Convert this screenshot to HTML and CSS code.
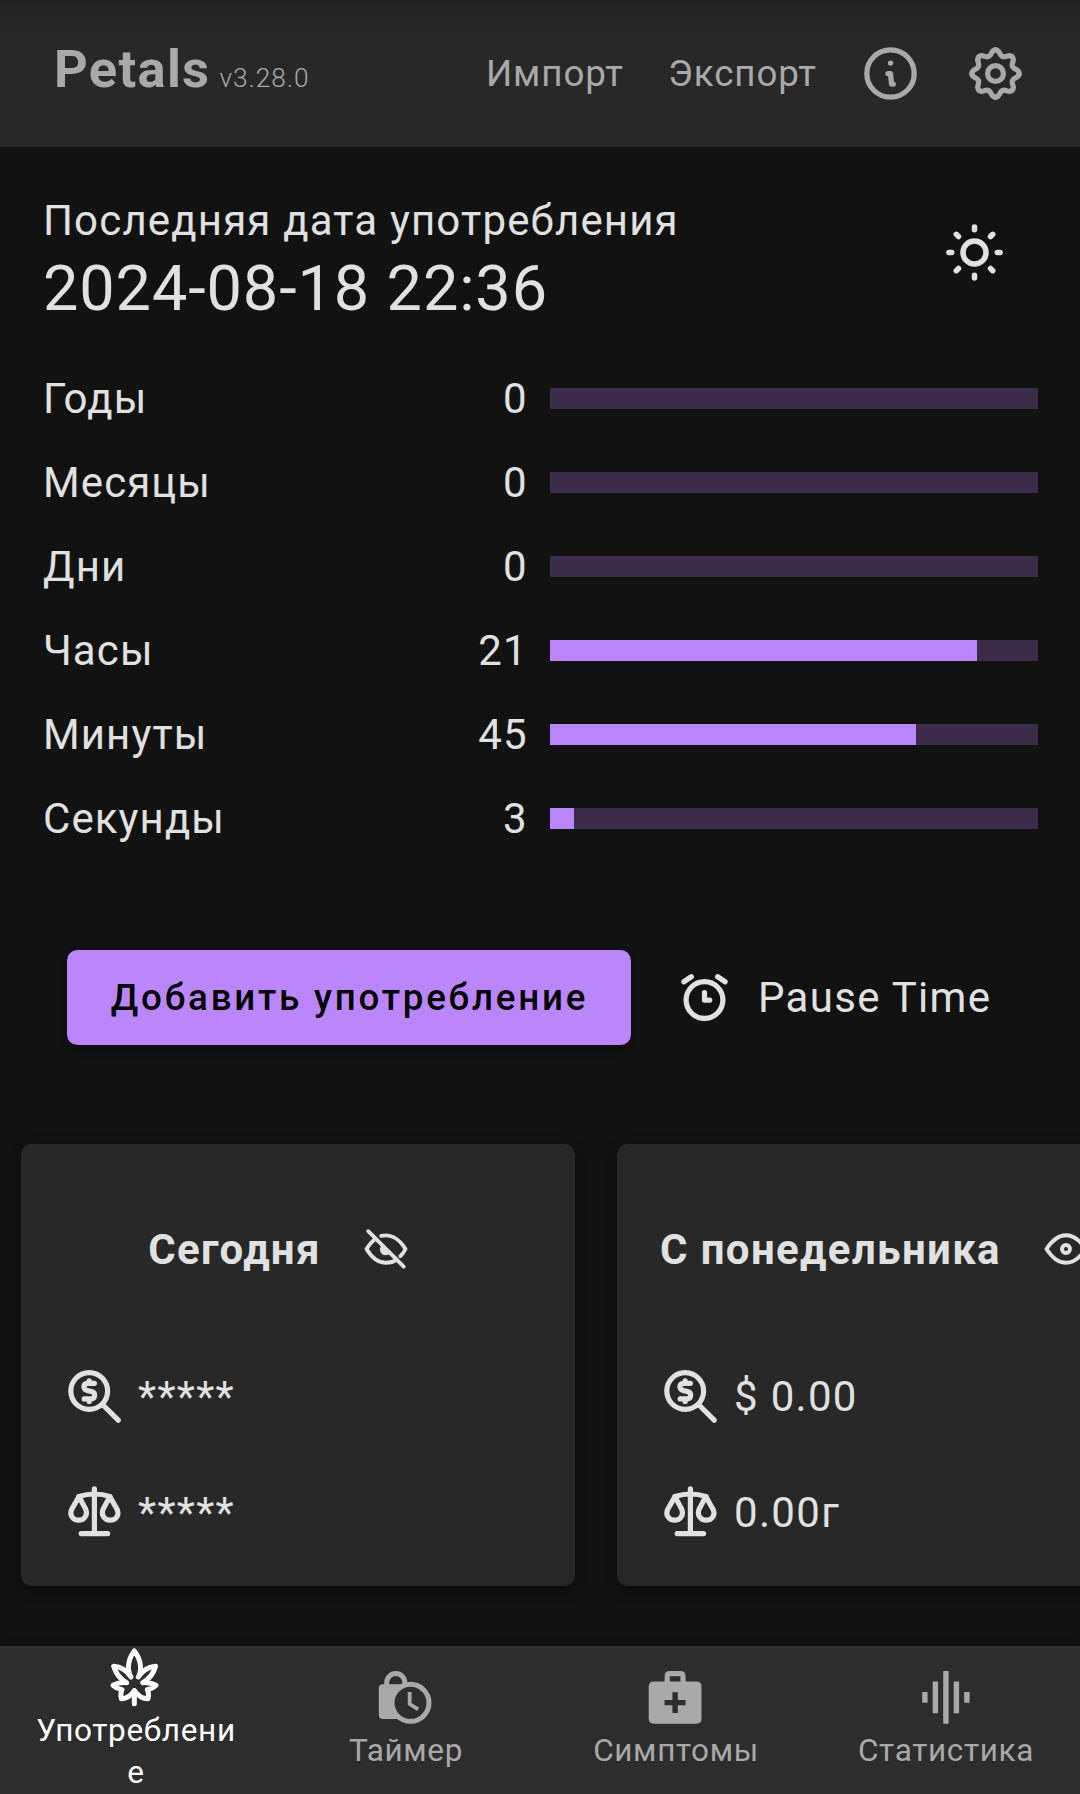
FILE: index.html
```html
<!DOCTYPE html>
<html lang="ru">
<head>
<meta charset="utf-8">
<title>Petals</title>
<link rel="stylesheet" href="styles.css">
</head>
<body>
<svg class="defs" aria-hidden="true">
  <defs>
    <symbol id="i-money" viewBox="0 0 53 53">
      <g fill="none" stroke="currentColor" stroke-width="5.2" stroke-linecap="round">
        <circle cx="21.2" cy="21" r="18.4"/>
        <path d="M35.5 35.5L50.2 50.2"/>
        <path d="M26.4 13.3H20.5C14.6 13.3 14.6 19.4 19 20.4L23.5 21.6C28.2 23 27.3 28.9 22.5 28.9H16.2M21.2 10.9V13M21.2 29V31.5"/>
      </g>
    </symbol>
    <symbol id="i-scale" viewBox="0 0 53 53">
      <g fill="none" stroke="currentColor" stroke-width="5.2" stroke-linecap="round" stroke-linejoin="round">
        <path d="M26.4 2.8V47.6M13.2 47.6H39.6M11 10.4Q18.5 8 26.4 8T41.8 10.4"/>
        <path d="M11 10.6L3.9 23C.8 29 5 34.2 10.6 34.2S20.2 29 17.6 23Z"/>
        <path d="M41.8 10.6L48.9 23C52 29 47.8 34.2 42.2 34.2S32.6 29 35.2 23Z"/>
      </g>
    </symbol>
    <symbol id="i-eye" viewBox="-22 -22 44 44">
      <g fill="none" stroke="currentColor" stroke-width="3.9" stroke-linejoin="round">
        <path d="M-19.5 0C-15 -7-9-13.8 0-13.8S15-7 19.5 0C15 7 9 13.8 0 13.8S-15 7-19.5 0Z"/>
        <circle r="4"/>
      </g>
    </symbol>
    <symbol id="i-eye-off" viewBox="-22 -22 44 44">
      <g fill="none" stroke="currentColor" stroke-width="3.9" stroke-linecap="round" stroke-linejoin="round">
        <path d="M-17.8-17.8L17.7 17.7M-4.8-13.1C7.5-16 14.5-7.8 19.5 0Q17.5 4 14.4 7.2"/>
        <path d="M-11.2-9.8C-15-6.8-17.5-3.6-19.5 0C-13.8 9.5-7.5 13.8 0 13.8C4.5 13.8 8 12.6 10.8 10.6"/>
      </g>
      <path d="M-4.5-3.8A5.8 5.8 0 0 0 4.2 4.4Z" fill="currentColor"/>
    </symbol>
    <path id="tooth" d="M0-23.6C4.8-23.6 3.2-18.6 7.04-17C10.9-15.4 13.3-20.08 16.69-16.69"/>
  </defs>
</svg>

<header class="topbar">
  <div class="brand"><span class="brand-name">Petals</span><span class="brand-version">v3.28.0</span></div>
  <a class="action action-import">Импорт</a>
  <a class="action action-export">Экспорт</a>
  <svg class="icon icon-info" viewBox="-31.5 -31.5 63 63" fill="none" stroke="currentColor" stroke-width="5.25" stroke-linecap="round" stroke-linejoin="round">
    <circle r="23.7"/>
    <path d="M-2.6 0H0L1 10.6H2.8"/>
    <circle cy="-10.4" r="2.7" fill="currentColor" stroke="none"/>
  </svg>
  <svg class="icon icon-gear" viewBox="-31.5 -31.5 63 63" fill="none" stroke="currentColor" stroke-width="5.25" stroke-linecap="round">
    <use href="#tooth"/><use href="#tooth" transform="rotate(45)"/><use href="#tooth" transform="rotate(90)"/><use href="#tooth" transform="rotate(135)"/>
    <use href="#tooth" transform="rotate(180)"/><use href="#tooth" transform="rotate(225)"/><use href="#tooth" transform="rotate(270)"/><use href="#tooth" transform="rotate(315)"/>
    <circle r="7.9"/>
  </svg>
</header>

<main class="content">
  <section class="last">
    <div class="last-text">
      <div class="last-label">Последняя дата употребления</div>
      <div class="last-date">2024-08-18 22:36</div>
    </div>
    <svg class="icon icon-sun" viewBox="-31.5 -31.5 63 63" fill="none" stroke="currentColor" stroke-width="5.5" stroke-linecap="round">
      <circle r="11.5"/>
      <path d="M0-25.6V-22.8M0 22.8V25.6M-25.6 0H-22.8M22.8 0H25.6M-18.2-18.2L-16-16M18.2-18.2L16-16M-18.2 18.2L-16 16M18.2 18.2L16 16"/>
    </svg>
  </section>

  <section class="counters">
    <div class="counter"><span>Годы</span><span class="num">0</span><div class="bar"></div></div>
    <div class="counter"><span>Месяцы</span><span class="num">0</span><div class="bar"></div></div>
    <div class="counter"><span>Дни</span><span class="num">0</span><div class="bar"></div></div>
    <div class="counter"><span>Часы</span><span class="num">21</span><div class="bar"><div class="fill" style="width:87.5%"></div></div></div>
    <div class="counter"><span>Минуты</span><span class="num">45</span><div class="bar"><div class="fill" style="width:75%"></div></div></div>
    <div class="counter"><span>Секунды</span><span class="num">3</span><div class="bar"><div class="fill" style="width:5%"></div></div></div>
  </section>

  <section class="controls">
    <button class="add">Добавить употребление</button>
    <svg class="icon icon-alarm" viewBox="-31.5 -34 63 63" fill="none" stroke="currentColor" stroke-width="5.25" stroke-linecap="round" stroke-linejoin="round">
      <circle r="18.4"/>
      <path d="M-20.6-18.2L-13.2-23.2M20.6-18.2L13.2-23.2M0-7.4V0H5.2"/>
    </svg>
    <span class="pause">Pause Time</span>
  </section>

  <section class="cards">
    <article class="card">
      <div class="card-head"><h2>Сегодня</h2><svg class="eye"><use href="#i-eye-off"/></svg></div>
      <div class="stat"><svg class="stat-icon"><use href="#i-money"/></svg><span>*****</span></div>
      <div class="stat"><svg class="stat-icon"><use href="#i-scale"/></svg><span>*****</span></div>
    </article>
    <article class="card">
      <div class="card-head"><h2>С понедельника</h2><svg class="eye"><use href="#i-eye"/></svg></div>
      <div class="stat"><svg class="stat-icon"><use href="#i-money"/></svg><span>$ 0.00</span></div>
      <div class="stat"><svg class="stat-icon"><use href="#i-scale"/></svg><span>0.00г</span></div>
    </article>
  </section>
</main>

<nav class="tabs">
  <a class="tab tab-active">
    <svg class="icon" viewBox="39 18 189 189" fill="none" stroke="currentColor" stroke-width="15" stroke-linecap="round" stroke-linejoin="round">
      <path d="M123 111C113 95 110 62 133 33C156 62 155 95 145 111C160 88 178 80 197 79C190 102 178 118 158 128Q178 126 198 136Q188 146 172 149Q178 160 174 176Q152 177 133 152Q116 177 94 176Q90 160 96 149Q80 146 69 136Q88 126 110 128C90 118 78 102 71 79C90 80 108 88 123 111Z"/>
      <path d="M133 152V191"/>
    </svg>
    <span>Употреблени<br>е</span>
  </a>
  <a class="tab">
    <svg class="icon" viewBox="850.5 78 189 189" fill="none" stroke="currentColor">
      <path d="M888.5 138V128a27.3 27.3 0 0 1 54.6 0V138" stroke-width="15"/>
      <rect x="865" y="133" width="90" height="104" rx="12" fill="currentColor" stroke="none"/>
      <circle class="clock-face" cx="960" cy="188.500" r="55.500" stroke-width="15"/>
      <path d="M957.500 156V192L983 208" stroke-width="11.500"/>
    </svg>
    <span>Таймер</span>
  </a>
  <a class="tab">
    <svg class="icon" viewBox="0 0 63 63" fill="currentColor" fill-rule="evenodd">
      <path d="M20.600 15.500V10.200Q20.600 5 25.800 5H36.400Q41.600 5 41.600 10.200V15.500H52.300Q57.500 15.500 57.500 20.700V52.500Q57.500 57.700 52.300 57.700H9.900Q4.700 57.700 4.700 52.500V20.700Q4.700 15.500 9.900 15.500ZM25.800 10.300H36.400V15.500H25.800ZM28.400 26.200V34H20.600V39.300H28.400V47.100H33.800V39.300H41.600V34H33.800V26.200Z"/>
    </svg>
    <span>Симптомы</span>
  </a>
  <a class="tab">
    <svg class="icon" viewBox="0 0 63 63" fill="currentColor">
      <path d="M29.200 5H34.600V57.800H29.200ZM18.700 15.500H24.100V47.200H18.700ZM39.700 15.500H45.100V47.200H39.700ZM8.200 26H13.600V36.700H8.200ZM50.200 26H55.600V36.700H50.200Z"/>
    </svg>
    <span>Статистика</span>
  </a>
</nav>
</body>
</html>
```
FILE: styles.css
```css
* { box-sizing: border-box; }

body {
  margin: 0;
  width: 1080px;
  height: 1794px;
  display: flex;
  flex-direction: column;
  overflow: hidden;
  background: #121212;
  color: #e1e1e1;
  font-family: Roboto, "Liberation Sans", sans-serif;
  font-size: 42px;
  letter-spacing: 1.31px;
}

svg { display: block; flex: none; }
.defs { position: absolute; width: 0; height: 0; }
.icon { width: 63px; height: 63px; }

.topbar {
  height: 147px;
  flex: none;
  display: flex;
  align-items: center;
  padding-left: 54px;
  background: linear-gradient(#1f1f1f 0, #252525 8px, #282828 40px);
  color: #a9a9a9;
}
.brand { width: 432px; line-height: 62px; white-space: nowrap; }
.brand-name { font-size: 52.5px; font-weight: 700; letter-spacing: 1.3px; }
.brand-version { margin-left: 9px; font-size: 26.25px; font-weight: 300; letter-spacing: 0.95px; }
.action { font-size: 36.75px; letter-spacing: 0.9px; white-space: nowrap; }
.action-import { width: 182px; }
.action-export { width: 191px; }
.icon-gear { margin-left: 42px; }

.content { flex: 1; padding-top: 46px; }

.last { display: flex; justify-content: space-between; padding: 0 74px 0 43px; }
.last-label { line-height: 56px; letter-spacing: 1.16px; }
.last-date { font-size: 63px; line-height: 80px; letter-spacing: 0.9px; }
.icon-sun { margin-top: 28px; }

.counters { padding: 27px 42px 0 43px; letter-spacing: 1.1px; }
.counter { display: grid; grid-template-columns: 1fr 150px 488px; align-items: center; height: 84px; }
.num { text-align: right; padding-right: 22px; letter-spacing: 1.31px; }
.bar { height: 21px; background: #3b2c4a; }
.fill { height: 100%; background: #bb86fc; }

.controls { display: flex; align-items: center; height: 95px; margin-top: 90px; padding-left: 67px; }
.add {
  width: 564px;
  height: 95px;
  padding: 0 0 0 1px;
  border: 0;
  border-radius: 10.5px;
  background: #bb86fc;
  color: #000;
  font: 500 36.75px Roboto, "Liberation Sans", sans-serif;
  letter-spacing: 2.76px;
  box-shadow: 0 4px 8px rgba(0, 0, 0, 0.25);
}
.icon-alarm { margin-left: 42px; }
.pause { margin-left: 22px; }

.cards { display: flex; gap: 42px; margin: 99px 0 0 21px; }
.card {
  flex: none;
  width: 554px;
  height: 442px;
  padding: 63px 42px 0 47px;
  border-radius: 10.5px;
  background: #282828;
  box-shadow: 0 4px 14px rgba(0, 0, 0, 0.3);
}
.card-head { display: flex; align-items: center; justify-content: center; gap: 43px; height: 84px; margin-bottom: 47px; padding-right: 45px; }
.card-head h2 { margin: 0; font-size: 42px; font-weight: 700; letter-spacing: 1.35px; white-space: nowrap; }
.eye { width: 44px; height: 44px; }
.stat { display: flex; align-items: center; gap: 17px; height: 116px; }
.stat-icon { width: 53px; height: 53px; }

.tabs { display: flex; height: 148px; flex: none; background: #2d2d2d; color: #a9a9a9; box-shadow: 0 -2px 6px rgba(0, 0, 0, 0.15); }
.tab { width: 270px; display: flex; flex-direction: column; align-items: center; padding-top: 20px; font-size: 31.5px; line-height: 42px; letter-spacing: 0.65px; text-align: center; }
.tab-active { padding-top: 0; color: #fff; }
.tab .icon { margin: 0 0 1px 0; }
.tab-active .icon { margin-right: 1px; }
.tab span { padding-left: 2px; }
.clock-face { fill: #2d2d2d; }
```
